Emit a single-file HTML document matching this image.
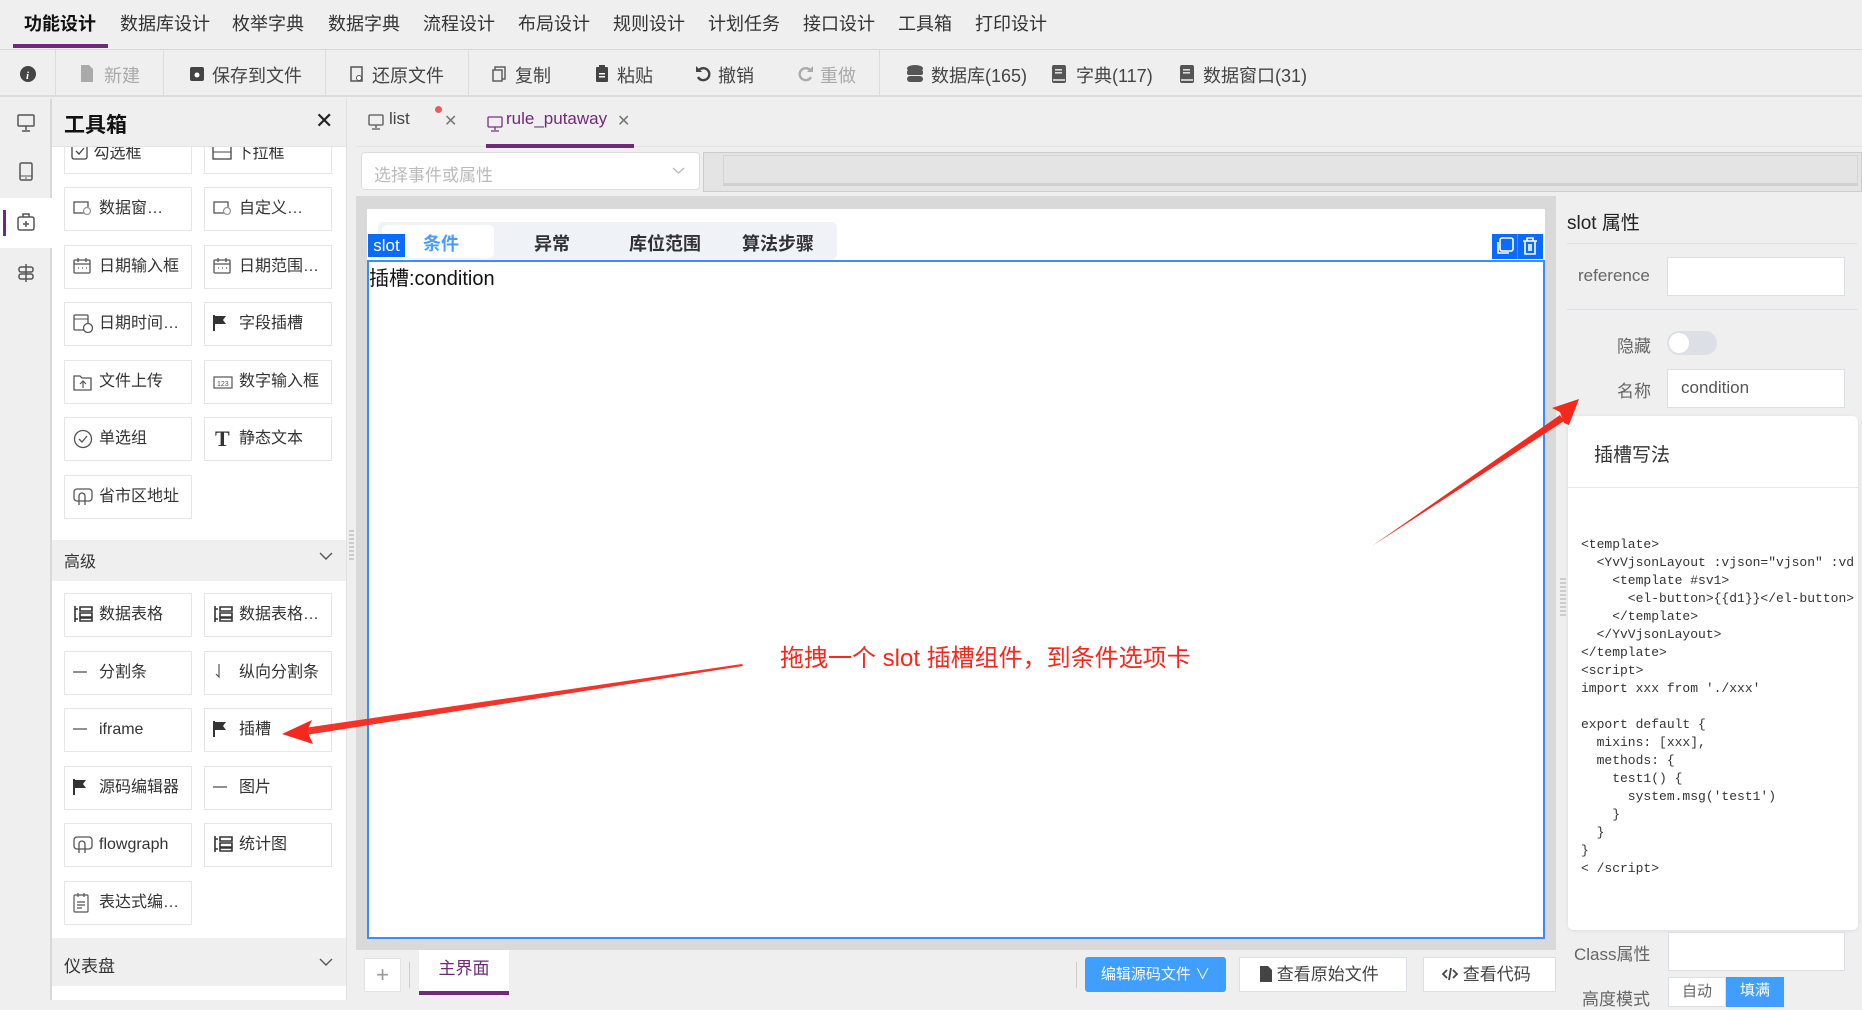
<!DOCTYPE html>
<html><head><meta charset="utf-8"><style>
*{box-sizing:border-box;margin:0;padding:0}
body{width:1862px;height:1000px;overflow:hidden;background:#efefef;font-family:"Liberation Sans","Noto Sans CJK SC",sans-serif;color:#333;position:relative}
.a{position:absolute}
.nav{left:0;top:0;width:1862px;height:50px;background:#efefef;border-bottom:1px solid #d6d6d6}
.nav span{position:absolute;top:10px;font-size:18px;color:#333}
.tb{left:0;top:50px;width:1862px;height:47px;border-bottom:2px solid #dcdcdc;background:#efefef}
.tb span{position:absolute;top:12px;font-size:18px;color:#444}
.sep{position:absolute;top:0;width:1px;height:47px;background:#dcdcdc}
.item{position:absolute;width:128px;height:44px;border:1px solid #e6e6e6;background:#fff;font-size:16px;color:#333;line-height:42px;padding-left:34px;white-space:nowrap;overflow:hidden}
.item svg{position:absolute;left:8px;top:12px}
.code{font-family:"Liberation Mono","Noto Sans CJK SC",monospace;font-size:13px;line-height:18px;color:#333;white-space:pre}
</style></head><body>
<div class="a nav">
<span style="left:24px;font-weight:bold;color:#111">功能设计</span>
<span style="left:120px">数据库设计</span><span style="left:232px">枚举字典</span><span style="left:328px">数据字典</span><span style="left:423px">流程设计</span><span style="left:518px">布局设计</span><span style="left:613px">规则设计</span><span style="left:708px">计划任务</span><span style="left:803px">接口设计</span><span style="left:898px">工具箱</span><span style="left:975px">打印设计</span>
<div class="a" style="left:13px;top:44px;width:95px;height:4px;background:#6f2a7a"></div>
</div>
<div class="a tb">
<svg class="a" style="left:20px;top:16px" width="16" height="16"><circle cx="8" cy="8" r="8" fill="#444"/><text x="6" y="13" font-size="11" fill="#fff" font-style="italic" font-weight="bold" font-family="Liberation Serif">i</text></svg>
<div class="sep" style="left:55px"></div>
<svg class="a" style="left:81px;top:15px" width="12" height="17"><path d="M0 0h8l4 4v13H0z" fill="#aaa"/></svg>
<span style="left:104px;color:#aaa">新建</span>
<div class="sep" style="left:163px"></div>
<svg class="a" style="left:190px;top:17px" width="14" height="14"><rect width="14" height="14" rx="2" fill="#444"/><circle cx="7" cy="8" r="2.5" fill="#fff"/></svg>
<span style="left:212px">保存到文件</span>
<div class="sep" style="left:325px"></div>
<svg class="a" style="left:350px;top:16px" width="13" height="16"><rect x="1" y="1" width="11" height="14" fill="none" stroke="#555" stroke-width="1.5"/><circle cx="9" cy="12" r="2.5" fill="#fff" stroke="#555"/></svg>
<span style="left:372px">还原文件</span>
<div class="sep" style="left:468px"></div>
<svg class="a" style="left:492px;top:16px" width="14" height="16"><rect x="3" y="1" width="10" height="12" fill="none" stroke="#555" stroke-width="1.4"/><rect x="1" y="4" width="9" height="11" fill="#efefef" stroke="#555" stroke-width="1.4"/></svg>
<span style="left:515px">复制</span>
<svg class="a" style="left:596px;top:15px" width="12" height="17"><rect x="0" y="2" width="12" height="15" rx="1" fill="#444"/><rect x="3" y="0" width="6" height="4" fill="#444"/><rect x="3" y="8" width="6" height="1.5" fill="#fff"/><rect x="3" y="11" width="6" height="1.5" fill="#fff"/></svg>
<span style="left:617px">粘贴</span>
<svg class="a" style="left:695px;top:15px" width="17" height="17"><path d="M4 5a6 6 0 1 1 -1 7" fill="none" stroke="#444" stroke-width="2.4"/><path d="M1 1v6h6z" fill="#444"/></svg>
<span style="left:718px">撤销</span>
<svg class="a" style="left:797px;top:15px" width="17" height="17"><path d="M13 5a6 6 0 1 0 1 7" fill="none" stroke="#aaa" stroke-width="2.4"/><path d="M16 1v6h-6z" fill="#aaa"/></svg>
<span style="left:820px;color:#aaa">重做</span>
<div class="sep" style="left:879px"></div>
<svg class="a" style="left:907px;top:15px" width="16" height="18"><ellipse cx="8" cy="3.5" rx="8" ry="3.5" fill="#555"/><rect y="5" width="16" height="5" rx="2" fill="#555"/><rect y="11" width="16" height="6" rx="3" fill="#555"/></svg>
<span style="left:931px">数据库(165)</span>
<svg class="a" style="left:1052px;top:15px" width="14" height="18"><rect width="14" height="18" rx="2" fill="#555"/><rect x="3" y="4" width="7" height="1.6" fill="#ddd"/><rect x="3" y="7" width="7" height="1.6" fill="#ddd"/><rect x="1" y="14" width="12" height="2" fill="#ccc"/></svg>
<span style="left:1076px">字典(117)</span>
<svg class="a" style="left:1180px;top:15px" width="14" height="18"><rect width="14" height="18" rx="2" fill="#555"/><rect x="3" y="4" width="7" height="1.6" fill="#ddd"/><rect x="3" y="7" width="7" height="1.6" fill="#ddd"/><rect x="1" y="14" width="12" height="2" fill="#ccc"/></svg>
<span style="left:1203px">数据窗口(31)</span>
</div>
<div class="a" style="left:0;top:99px;width:52px;height:901px;background:#efefef;border-right:2px solid #d9d9d9"></div>
<svg class="a" style="left:17px;top:114px" width="18" height="18"><rect x="1" y="1" width="16" height="11" rx="1" fill="none" stroke="#555" stroke-width="1.5"/><path d="M9 12v4M5 17h8" stroke="#555" stroke-width="1.5"/></svg>
<svg class="a" style="left:19px;top:162px" width="14" height="19"><rect x="1" y="1" width="12" height="17" rx="1.5" fill="none" stroke="#555" stroke-width="1.5"/><path d="M1 14h12" stroke="#555"/><circle cx="7" cy="16" r="0.8" fill="#555"/></svg>
<div class="a" style="left:0;top:198px;width:52px;height:50px;background:#fff"></div>
<div class="a" style="left:3px;top:210px;width:3px;height:26px;background:#6f2a7a"></div>
<svg class="a" style="left:17px;top:213px" width="18" height="18"><rect x="1" y="4" width="16" height="13" rx="2" fill="none" stroke="#555" stroke-width="1.5"/><path d="M6 4V1h6v3M9 8v6M6 11h6" stroke="#555" stroke-width="1.5" fill="none"/></svg>
<svg class="a" style="left:17px;top:264px" width="18" height="18"><rect x="2" y="3" width="14" height="5" rx="2" fill="none" stroke="#555" stroke-width="1.5"/><rect x="2" y="10" width="14" height="5" rx="2" fill="none" stroke="#555" stroke-width="1.5"/><path d="M9 0v18" stroke="#555" stroke-width="1.5"/></svg>
<div class="a" style="left:52px;top:99px;width:294px;height:901px;background:#fff"></div>
<div class="a" style="left:346px;top:99px;width:10px;height:901px;background:#efefef;border-left:1px solid #e0e0e0"></div>
<div class="a" style="left:349px;top:530px;width:5px;height:32px;background:repeating-linear-gradient(#ccc 0 2px,transparent 2px 4px)"></div>
<div class="a" style="left:64px;top:130px;width:128px;height:44px;border:1px solid #e6e6e6"></div>
<div class="a" style="left:204px;top:130px;width:128px;height:44px;border:1px solid #e6e6e6"></div>
<div class="a" style="left:71px;top:139px;font-size:16px;color:#333"><svg width="18" height="16" style="vertical-align:-2px"><rect x="1" y="1" width="15" height="14" rx="2" fill="none" stroke="#444" stroke-width="1.3"/><path d="M5 7l3 3 5-6" fill="none" stroke="#444" stroke-width="1.3"/></svg> 勾选框</div>
<div class="a" style="left:212px;top:139px;font-size:16px;color:#333"><svg width="20" height="16" style="vertical-align:-2px"><rect x="1" y="1" width="18" height="14" fill="none" stroke="#444" stroke-width="1.3"/><path d="M1 8h18" stroke="#444"/></svg> 下拉框</div>
<div class="a" style="left:52px;top:99px;width:294px;height:48px;background:#efefef;border-bottom:1px solid #e3e3e3"></div>
<div class="a" style="left:64px;top:109px;font-size:21px;font-weight:bold;color:#111">工具箱</div>
<div class="a" style="left:315px;top:108px;font-size:22px;color:#222">✕</div>
<div class="item" style="left:64px;top:187px">数据窗…<svg width="20" height="16"><rect x="1" y="2" width="14" height="11" fill="none" stroke="#555" stroke-width="1.3"/><circle cx="14" cy="11" r="3.5" fill="#fff" stroke="#999" stroke-width="1.3"/></svg></div>
<div class="item" style="left:204px;top:187px">自定义…<svg width="20" height="16"><rect x="1" y="2" width="14" height="11" fill="none" stroke="#555" stroke-width="1.3"/><circle cx="14" cy="11" r="3.5" fill="#fff" stroke="#999" stroke-width="1.3"/></svg></div>
<div class="item" style="left:64px;top:245px">日期输入框<svg width="18" height="16"><rect x="1" y="2" width="16" height="13" rx="1" fill="none" stroke="#555" stroke-width="1.3"/><path d="M1 6h16M5 0v4M13 0v4M5 10h1M9 10h1M13 10h1" stroke="#555" stroke-width="1.3"/></svg></div>
<div class="item" style="left:204px;top:245px">日期范围…<svg width="18" height="16"><rect x="1" y="2" width="16" height="13" rx="1" fill="none" stroke="#555" stroke-width="1.3"/><path d="M1 6h16M5 0v4M13 0v4M5 10h1M9 10h1M13 10h1" stroke="#555" stroke-width="1.3"/></svg></div>
<div class="item" style="left:64px;top:302px">日期时间…<svg width="20" height="20" style="top:10px"><rect x="1" y="2" width="14" height="15" rx="1" fill="none" stroke="#555" stroke-width="1.3"/><path d="M1 6h14" stroke="#555"/><circle cx="15" cy="15" r="4.5" fill="#fff" stroke="#555" stroke-width="1.3"/></svg></div>
<div class="item" style="left:204px;top:302px">字段插槽<svg width="14" height="16"><path d="M1 0v16" stroke="#333" stroke-width="2"/><path d="M2 1h11l-3 4 3 4H2z" fill="#333"/></svg></div>
<div class="item" style="left:64px;top:360px">文件上传<svg width="20" height="18"><path d="M1 3h6l2 2h9v12H1z" fill="none" stroke="#555" stroke-width="1.3"/><path d="M10 15V9M7 11l3-3 3 3" fill="none" stroke="#555" stroke-width="1.2"/></svg></div>
<div class="item" style="left:204px;top:360px">数字输入框<svg width="20" height="14" style="top:15px"><rect x="1" y="1" width="18" height="11" fill="none" stroke="#555" stroke-width="1.2"/><text x="4" y="10" font-size="7" fill="#555">123</text></svg></div>
<div class="item" style="left:64px;top:417px">单选组<svg width="20" height="20" style="top:11px"><circle cx="10" cy="10" r="8.5" fill="none" stroke="#555" stroke-width="1.3"/><path d="M6 10l3 3 5-6" fill="none" stroke="#555" stroke-width="1.3"/></svg></div>
<div class="item" style="left:204px;top:417px"><b style="position:absolute;left:10px;top:0;font-family:'Liberation Serif';font-size:22px">T</b>静态文本</div>
<div class="item" style="left:64px;top:475px">省市区地址<svg width="20" height="18"><rect x="1" y="1" width="18" height="12" rx="3" fill="none" stroke="#555" stroke-width="1.3"/><path d="M6 17V8a3 3 0 0 1 6 0v9" fill="none" stroke="#555" stroke-width="1.3"/></svg></div>
<div class="a" style="left:52px;top:540px;width:294px;height:41px;background:#efefef"></div>
<div class="a" style="left:64px;top:548px;font-size:16px;color:#333">高级</div>
<svg class="a" style="left:319px;top:552px" width="14" height="9"><path d="M1 1l6 6 6-6" fill="none" stroke="#555" stroke-width="1.4"/></svg>
<div class="item" style="left:64px;top:593px">数据表格<svg width="20" height="16"><path d="M2 0v16M2 3h3M2 13h3M7 1h12v4H7zM7 7h12v4H7zM7 12h12v3H7z" fill="none" stroke="#333" stroke-width="1.6"/></svg></div>
<div class="item" style="left:204px;top:593px">数据表格…<svg width="20" height="16"><path d="M2 0v16M2 3h3M2 13h3M7 1h12v4H7zM7 7h12v4H7zM7 12h12v3H7z" fill="none" stroke="#333" stroke-width="1.6"/></svg></div>
<div class="item" style="left:64px;top:651px">分割条<svg width="14" height="16"><path d="M0 8h14" stroke="#555" stroke-width="1.3"/></svg></div>
<div class="item" style="left:204px;top:651px">纵向分割条<svg width="14" height="16"><path d="M6 0v13l-3-3" fill="none" stroke="#555" stroke-width="1.2"/></svg></div>
<div class="item" style="left:64px;top:708px">iframe<svg width="14" height="16"><path d="M0 8h14" stroke="#555" stroke-width="1.3"/></svg></div>
<div class="item" style="left:204px;top:708px">插槽<svg width="14" height="16"><path d="M1 0v16" stroke="#333" stroke-width="2"/><path d="M2 1h11l-3 4 3 4H2z" fill="#333"/></svg></div>
<div class="item" style="left:64px;top:766px">源码编辑器<svg width="14" height="16"><path d="M1 0v16" stroke="#333" stroke-width="2"/><path d="M2 1h11l-3 4 3 4H2z" fill="#333"/></svg></div>
<div class="item" style="left:204px;top:766px">图片<svg width="14" height="16"><path d="M0 8h14" stroke="#555" stroke-width="1.3"/></svg></div>
<div class="item" style="left:64px;top:823px">flowgraph<svg width="20" height="18"><rect x="1" y="1" width="18" height="12" rx="3" fill="none" stroke="#555" stroke-width="1.3"/><path d="M6 17V8a3 3 0 0 1 6 0v9" fill="none" stroke="#555" stroke-width="1.3"/></svg></div>
<div class="item" style="left:204px;top:823px">统计图<svg width="20" height="16"><path d="M2 0v16M2 3h3M2 13h3M7 1h12v4H7zM7 7h12v4H7zM7 12h12v3H7z" fill="none" stroke="#333" stroke-width="1.6"/></svg></div>
<div class="item" style="left:64px;top:881px">表达式编…<svg width="16" height="20" style="top:11px"><rect x="1" y="2" width="14" height="17" rx="1" fill="none" stroke="#555" stroke-width="1.2"/><path d="M5 0v4M11 0v4M4 9h8M4 12h8M4 15h5" stroke="#555" stroke-width="1.2"/></svg></div>
<div class="a" style="left:52px;top:938px;width:294px;height:48px;background:#efefef"></div>
<div class="a" style="left:64px;top:952px;font-size:17px;color:#333">仪表盘</div>
<svg class="a" style="left:319px;top:958px" width="14" height="9"><path d="M1 1l6 6 6-6" fill="none" stroke="#555" stroke-width="1.4"/></svg>
<div class="a" style="left:356px;top:99px;width:1506px;height:48px;background:#efefef;border-bottom:1px solid #e3e3e3"></div>
<svg class="a" style="left:368px;top:114px" width="16" height="16"><rect x="1" y="1" width="14" height="10" rx="1" fill="none" stroke="#555" stroke-width="1.3"/><path d="M8 11v3M4 15h8" stroke="#555" stroke-width="1.3"/></svg>
<div class="a" style="left:389px;top:109px;font-size:17px;color:#444">list</div>
<div class="a" style="left:435px;top:106px;width:7px;height:7px;border-radius:50%;background:#f05a5a"></div>
<div class="a" style="left:444px;top:111px;font-size:16px;color:#777">✕</div>
<svg class="a" style="left:487px;top:116px" width="16" height="16"><rect x="1" y="1" width="14" height="10" rx="1" fill="none" stroke="#7a2f86" stroke-width="1.3"/><path d="M8 11v3M4 15h8" stroke="#7a2f86" stroke-width="1.3"/></svg>
<div class="a" style="left:506px;top:109px;font-size:17px;color:#6f2a7a">rule_putaway</div>
<div class="a" style="left:617px;top:111px;font-size:16px;color:#777">✕</div>
<div class="a" style="left:486px;top:144px;width:148px;height:4px;background:#6f2a7a"></div>
<div class="a" style="left:361px;top:152px;width:339px;height:38px;background:#fff;border:1px solid #ddd;border-radius:4px"></div>
<div class="a" style="left:374px;top:161px;font-size:17px;color:#bbb">选择事件或属性</div>
<svg class="a" style="left:672px;top:167px" width="13" height="8"><path d="M1 1l5.5 5 5.5-5" fill="none" stroke="#bbb" stroke-width="1.3"/></svg>
<div class="a" style="left:703px;top:152px;width:1159px;height:40px;background:#e4e4e4;border:1px solid #ccc"></div>
<div class="a" style="left:723px;top:155px;width:1135px;height:31px;border:1px solid #d4d4d4;border-bottom:3px solid #d0d0d0"></div>
<div class="a" style="left:356px;top:196px;width:1200px;height:754px;background:#d9d9d9"></div>
<div class="a" style="left:367px;top:209px;width:1178px;height:730px;background:#fff"></div>
<div class="a" style="left:378px;top:222px;width:459px;height:37px;background:#eff2f7;border-radius:5px"></div>
<div class="a" style="left:382px;top:225px;width:112px;height:33px;background:#fff;border-radius:5px"></div>
<div class="a" style="left:368px;top:234px;width:37px;height:23px;background:#0a6cff;color:#fff;font-size:17px;line-height:23px;text-align:center">slot</div>
<div class="a" style="left:423px;top:230px;font-size:18px;font-weight:bold;color:#4a9cff">条件</div>
<div class="a" style="left:534px;top:230px;font-size:18px;font-weight:bold;color:#303133">异常</div>
<div class="a" style="left:629px;top:230px;font-size:18px;font-weight:bold;color:#303133">库位范围</div>
<div class="a" style="left:742px;top:230px;font-size:18px;font-weight:bold;color:#303133">算法步骤</div>
<div class="a" style="left:1492px;top:234px;width:51px;height:25px;background:#0a6cff"></div>
<svg class="a" style="left:1495px;top:236px" width="20" height="20"><rect x="5" y="2" width="13" height="13" rx="2" fill="none" stroke="#fff" stroke-width="1.6"/><path d="M3 6v11h11" fill="none" stroke="#fff" stroke-width="1.6"/></svg>
<div class="a" style="left:1517px;top:234px;width:1px;height:25px;background:#4c95ff"></div>
<svg class="a" style="left:1521px;top:236px" width="18" height="20"><path d="M2 5h14M6 5V2h6v3M4 5v13h10V5M8 8v7M10 8v7" fill="none" stroke="#fff" stroke-width="1.6"/></svg>
<div class="a" style="left:367px;top:260px;width:1178px;height:679px;border:2px solid #3a8cff"></div>
<div class="a" style="left:369px;top:262px;font-size:20px;color:#111">插槽:condition</div>
<div class="a" style="left:1556px;top:196px;width:306px;height:804px;background:#efefef"></div>
<div class="a" style="left:1560px;top:578px;width:6px;height:40px;background:repeating-linear-gradient(#ccc 0 2px,transparent 2px 4px)"></div>
<div class="a" style="left:1567px;top:208px;font-size:19px;color:#222">slot 属性</div>
<div class="a" style="left:1567px;top:243px;width:290px;height:1px;background:#dcdfe6"></div>
<div class="a" style="left:1578px;top:266px;font-size:17px;color:#666">reference</div>
<div class="a" style="left:1667px;top:257px;width:178px;height:39px;background:#fff;border:1px solid #dcdfe6"></div>
<div class="a" style="left:1567px;top:309px;width:290px;height:1px;background:#dcdfe6"></div>
<div class="a" style="left:1617px;top:332px;font-size:17px;color:#666">隐藏</div>
<div class="a" style="left:1667px;top:331px;width:50px;height:24px;border-radius:12px;background:#dcdfe6"></div>
<div class="a" style="left:1669px;top:333px;width:20px;height:20px;border-radius:10px;background:#fff"></div>
<div class="a" style="left:1617px;top:377px;font-size:17px;color:#666">名称</div>
<div class="a" style="left:1667px;top:369px;width:178px;height:39px;background:#fff;border:1px solid #dcdfe6"></div>
<div class="a" style="left:1681px;top:378px;font-size:17px;color:#555">condition</div>
<div class="a" style="left:1568px;top:416px;width:290px;height:514px;background:#fff;border-radius:5px;box-shadow:0 1px 4px rgba(0,0,0,.08)"></div>
<div class="a" style="left:1594px;top:440px;font-size:19px;color:#333">插槽写法</div>
<div class="a" style="left:1568px;top:487px;width:290px;height:1px;background:#e4e7ed"></div>
<div class="a code" style="left:1581px;top:536px;width:276px;overflow:hidden">&lt;template&gt;
  &lt;YvVjsonLayout :vjson="vjson" :vd
    &lt;template #sv1&gt;
      &lt;el-button&gt;{{d1}}&lt;/el-button&gt;
    &lt;/template&gt;
  &lt;/YvVjsonLayout&gt;
&lt;/template&gt;
&lt;script&gt;
import xxx from './xxx'

export default {
  mixins: [xxx],
  methods: {
    test1() {
      system.msg('test1')
    }
  }
}
&lt; /script&gt;</div>
<div class="a" style="left:1574px;top:940px;font-size:17px;color:#666">Class属性</div>
<div class="a" style="left:1668px;top:932px;width:177px;height:39px;background:#fff;border:1px solid #dcdfe6"></div>
<div class="a" style="left:1582px;top:985px;font-size:17px;color:#666">高度模式</div>
<div class="a" style="left:1668px;top:977px;width:58px;height:30px;background:#fff;border:1px solid #dcdfe6;font-size:15px;color:#666;text-align:center;line-height:28px">自动</div>
<div class="a" style="left:1726px;top:977px;width:58px;height:30px;background:#409eff;font-size:15px;color:#fff;text-align:center;line-height:28px">填满</div>
<div class="a" style="left:356px;top:950px;width:1200px;height:50px;background:#efefef"></div>
<div class="a" style="left:364px;top:958px;width:37px;height:34px;background:#fff;border:1px solid #e3e3e3;text-align:center;font-size:22px;color:#999;line-height:32px">+</div>
<div class="a" style="left:409px;top:962px;width:1px;height:26px;background:#ccc"></div>
<div class="a" style="left:419px;top:950px;width:90px;height:45px;background:#fff;border-bottom:4px solid #6f2a7a;text-align:center;font-size:17px;color:#6f2a7a;line-height:38px">主界面</div>
<div class="a" style="left:1076px;top:962px;width:1px;height:26px;background:#ccc"></div>
<div class="a" style="left:1085px;top:957px;width:141px;height:35px;background:#409eff;border-radius:3px;color:#fff;font-size:15px;line-height:35px;text-align:center">编辑源码文件 ∨</div>
<div class="a" style="left:1239px;top:957px;width:168px;height:35px;background:#fff;border:1px solid #dcdfe6;font-size:17px;color:#444;line-height:33px;padding-left:20px"><svg width="12" height="16" style="vertical-align:-2px"><path d="M0 0h8l4 4v12H0z" fill="#444"/></svg> 查看原始文件</div>
<div class="a" style="left:1423px;top:957px;width:133px;height:35px;background:#fff;border:1px solid #dcdfe6;font-size:17px;color:#444;line-height:33px;padding-left:18px"><svg width="16" height="14" style="vertical-align:-1px"><path d="M5 3L1 7l4 4M11 3l4 4-4 4M9 1L7 13" fill="none" stroke="#444" stroke-width="1.8"/></svg> 查看代码</div>
<div class="a" style="left:780px;top:638px;font-size:24px;color:#f5281e;white-space:nowrap">拖拽一个 slot 插槽组件，到条件选项卡</div>
<svg class="a" style="left:0;top:0" width="1862" height="1000">
<polygon points="742,664 304,728 306,735 743,666" fill="#f5281e" opacity="0.95"/>
<polygon points="282,734 312,720 307,731 313,744" fill="#f5281e"/>
<polygon points="1372,546 1560,415 1564,421" fill="#f5281e"/>
<polygon points="1579,399 1552,408 1560,412 1564,423 1569,425" fill="#f5281e"/>
</svg>
</body></html>
